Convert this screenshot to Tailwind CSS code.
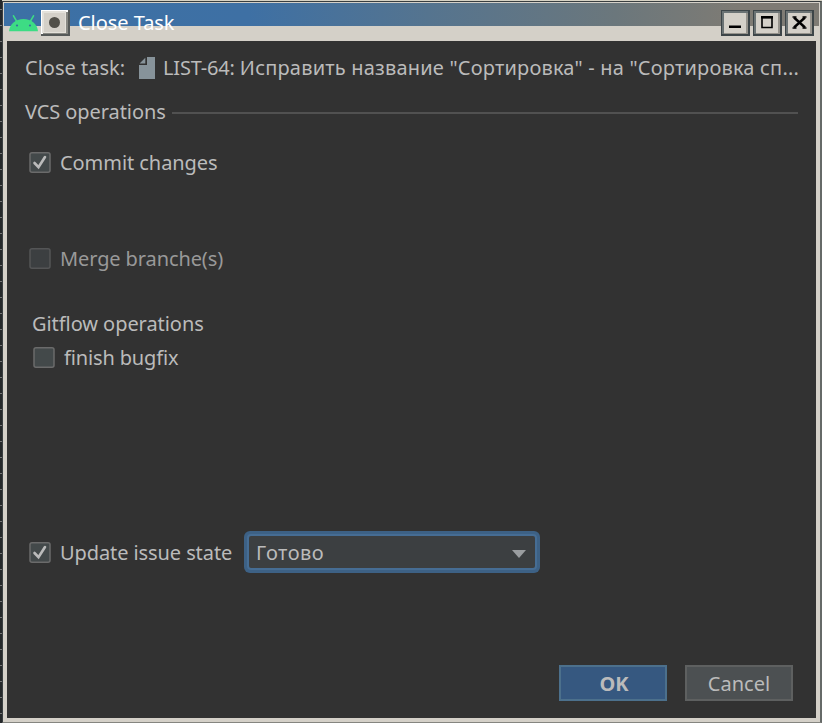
<!DOCTYPE html>
<html lang="ru">
<head>
<meta charset="utf-8">
<title>Close Task</title>
<script src="https://cdn.jsdelivr.net/npm/@tailwindcss/browser@4"></script>
</head>
<body class="w-[822px] h-[723px] overflow-hidden bg-[#d4d0c8] font-['Noto_Sans',sans-serif] text-[20px] leading-[28px] text-[#bbbbbb]">
<div class="flex w-[822px] h-[723px]">
  <div class="w-[2px] shrink-0 bg-[repeating-linear-gradient(180deg,#25282a_0px,#25282a_9px,#777777_9px,#777777_10px,#25282a_10px,#25282a_16px)]"></div>
  <div class="w-[820px] h-[723px] border-t border-[#d6d2c4] flex">
    <div class="w-[820px] h-[722px] border-t border-l border-[#393e40] border-r-2 border-r-[#666a68] border-b border-b-[#858580] bg-[#d4d0c8] pl-px pt-px flex flex-col">
      <header class="h-[38px] w-[815px] flex items-start bg-[linear-gradient(90deg,#3c70a5_0%,#3e70a4_30%,#55748f_52%,#6b777c_75%,#7e7b74_90%,#7e7b74_100%)] bg-[length:100%_23px] bg-no-repeat">
        <svg class="mt-[11px] ml-[5px] w-[29px] h-[18px]" viewBox="0 0 29 18"><path d="M4.500 1.800l3.200 5.500M24.500 1.800l-3.200 5.500" stroke="#3ddc84" stroke-width="1.600" stroke-linecap="round"/><path d="M0 17.300C.7 10 6.500 5 14.500 5S28.300 10 29 17.300z" fill="#3ddc84"/><circle cx="8" cy="11.500" r="1.100" fill="#3970a0"/><circle cx="21" cy="11.500" r="1.100" fill="#3970a0"/></svg>
        <svg class="mt-[7px] ml-[3px] w-[29px] h-[26px]" viewBox="0 0 29 26"><path d="M0 0h29v26H0z" fill="#555958"/><path d="M0 0h27v24H0z" fill="#fff"/><path d="M2 2h25v22H2z" fill="#888882"/><path d="M1 1h24v22H1z" fill="#e4e1da"/><path d="M3 3h21v19H3z" fill="#d4d0c8"/><circle cx="13.500" cy="12.500" r="5.500" fill="#514f48"/></svg>
        <span class="ml-[8px] mt-[6px] whitespace-nowrap text-white tracking-[-0.05px]">Close Task</span>
        <div class="ml-auto mr-[5px] mt-[7px] flex gap-[3px]">
          <svg class="w-[29px] h-[26px]" viewBox="0 0 29 26"><path d="M0 0h29v26H0z" fill="#3d4548"/><path d="M1 1h26v23H1z" fill="#6b7374"/><path d="M3 3h24v21H3z" fill="#96938c"/><path d="M3 3h22v20H3z" fill="#d4d0c8"/><path d="M8 15.500h12v2.500H8z"/></svg>
          <svg class="w-[29px] h-[26px]" viewBox="0 0 29 26"><path d="M0 0h29v26H0z" fill="#3d4548"/><path d="M1 1h26v23H1z" fill="#6b7374"/><path d="M3 3h24v21H3z" fill="#96938c"/><path d="M3 3h22v20H3z" fill="#d4d0c8"/><path d="M9 7.500h10v10H9z" fill="none" stroke="#000" stroke-width="1.600"/><path d="M8 6h12v2.500H8z"/></svg>
          <svg class="w-[29px] h-[26px]" viewBox="0 0 29 26"><path d="M0 0h29v26H0z" fill="#3d4548"/><path d="M1 1h26v23H1z" fill="#6b7374"/><path d="M3 3h24v21H3z" fill="#96938c"/><path d="M3 3h22v20H3z" fill="#d4d0c8"/><path d="M9 7.500l11 10M20 7.500l-11 10" stroke="#000" stroke-width="2.400"/><path d="M7.500 7h4M17.500 7h4M7.500 18h4M17.500 18h4" stroke="#000" stroke-width="1.500"/></svg>
        </div>
      </header>
      <main class="ml-[3px] w-[809px] h-[677px] bg-[#323232] pl-[18px] flex flex-col items-start">
        <div class="mt-[13px] flex h-[28px] items-center whitespace-nowrap">
          <span class="w-[114px]">Close task:</span>
          <svg class="-mt-px w-[16px] h-[22px]" viewBox="0 0 16 22"><path d="M8 0h8v22H0V8h8z" fill="#87939a"/><path d="M6.300 .8v5.700H.6z" fill="#87939a"/></svg>
          <span class="ml-[8px]"><span class="tracking-[-0.18px]">LIST-64: </span><span class="tracking-[0.19px]">Исправить название "Сортировка" - на "Сортировка сп...</span></span>
        </div>
        <div class="mt-[16px] flex h-[28px] w-[773px] items-center"><span class="tracking-[-0.08px]">VCS operations</span><div class="ml-auto mt-[2px] h-[2px] w-[626px] bg-[#515151]"></div></div>
        <div class="mt-[23px] ml-[4px] flex h-[28px] items-center"><svg class="w-[22px] h-[22px]" viewBox="0 0 22 22"><rect x="1" y=".75" width="20" height="19.500" rx="2" fill="#43494a" stroke="#6b6b6b" stroke-width="1.500"/><path d="M5.500 11l4 4.200L16 5" fill="none" stroke="#bbb" stroke-width="2.600" stroke-linecap="round"/></svg><span class="ml-[9px] tracking-[-0.06px]">Commit changes</span></div>
        <div class="mt-[68px] ml-[4px] flex h-[28px] items-center text-[#999999]"><svg class="w-[22px] h-[22px]" viewBox="0 0 22 22"><rect x="1" y=".75" width="20" height="19.500" rx="2" fill="#3c3f41" stroke="#545556" stroke-width="1.500"/></svg><span class="ml-[9px] tracking-[-0.11px]">Merge branche(s)</span></div>
        <div class="mt-[37px] ml-[7px] tracking-[-0.06px]">Gitflow operations</div>
        <div class="mt-[6px] ml-[8px] flex h-[28px] items-center"><svg class="w-[22px] h-[22px]" viewBox="0 0 22 22"><rect x="1" y=".75" width="20" height="19.500" rx="2" fill="#43494a" stroke="#6b6b6b" stroke-width="1.500"/></svg><span class="ml-[9px] tracking-[-0.15px]">finish bugfix</span></div>
        <div class="mt-[159px] ml-[4px] flex h-[42px] items-center"><svg class="mt-[2px] w-[22px] h-[22px]" viewBox="0 0 22 22"><rect x="1" y=".75" width="20" height="19.500" rx="2" fill="#43494a" stroke="#6b6b6b" stroke-width="1.500"/><path d="M5.500 11l4 4.200L16 5" fill="none" stroke="#bbb" stroke-width="2.600" stroke-linecap="round"/></svg><span class="mt-[2px] ml-[9px] w-[184px] tracking-[-0.09px]">Update issue state</span>
          <div class="w-[296px] h-[42px] rounded-[6px] bg-[#3d6185] p-[3px]"><div class="h-[36px] rounded-[4px] border-2 border-[#466d94] bg-[#3c3f41] flex items-center pl-[7px] pr-[9px]"><span class="mt-[2px] tracking-[0.5px]">Готово</span><svg class="ml-auto mt-[3px] w-[14px] h-[8px]" viewBox="0 0 14 8"><path d="M0 0h14L7 8z" fill="#9a9da0"/></svg></div></div>
        </div>
        <div class="mt-[92px] ml-[534px] flex gap-[18px]"><div class="flex h-[36px] w-[108px] items-center justify-center border-2 border-[#4c708c] bg-[#365880] pt-[2px] pl-[2px] font-bold">OK</div><div class="flex h-[36px] w-[108px] items-center justify-center border-2 border-[#5e6060] bg-[#4c5052] pt-[2px]">Cancel</div></div>
      </main>
    </div>
  </div>
</div>
</body>
</html>
